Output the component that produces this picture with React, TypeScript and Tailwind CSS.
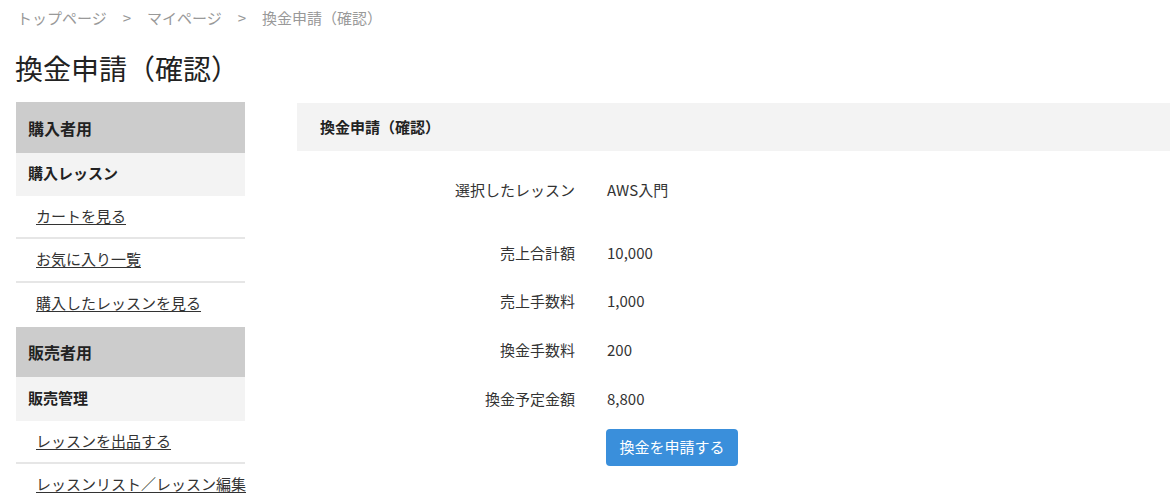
import React from "react";

const font = { fontFamily: '"Noto Sans CJK JP", "Noto Sans", sans-serif' };

type Row = { label: string; value: string; gap: string };

const rows: Row[] = [
  { label: "売上合計額", value: "10,000", gap: "h-[26px]" },
  { label: "売上手数料", value: "1,000", gap: "h-[27px]" },
  { label: "換金手数料", value: "200", gap: "h-[27px]" },
  { label: "換金予定金額", value: "8,800", gap: "" },
];

function SideHead({ children, h }: { children: React.ReactNode; h: string }) {
  return (
    <div className={"bg-[#cccccc] flex items-center pl-3 text-base font-bold text-[#222] " + h}>
      {children}
    </div>
  );
}

function SideSub({ children, h }: { children: React.ReactNode; h: string }) {
  return (
    <div className={"bg-[#f3f3f3] flex items-center pl-3 pb-[2px] text-[15px] font-bold text-[#222] " + h}>
      {children}
    </div>
  );
}

function SideLink({ children, h, last }: { children: React.ReactNode; h: string; last?: boolean }) {
  return (
    <div
      className={
        "flex items-center pl-5 text-[15px] text-[#333] whitespace-nowrap " +
        h +
        (last ? " pb-[4px]" : " pb-[1px] border-b-2 border-[#e6e6e6]")
      }
    >
      <a href="#" className="underline underline-offset-2">
        {children}
      </a>
    </div>
  );
}

export default function App() {
  return (
    <div className="bg-white w-[1171px] h-[497px] overflow-hidden text-[#333]" style={font}>
      <div className="pl-[17px] pt-[8px] leading-[20px] flex items-center gap-[16px] text-[15px] text-[#999]">
        <span>トップページ</span>
        <span>&gt;</span>
        <span>マイページ</span>
        <span>&gt;</span>
        <span>換金申請（確認）</span>
      </div>
      <h1 className="pl-[15px] mt-[24px] text-[28px] leading-[32px] text-[#222]">換金申請（確認）</h1>
      <div className="flex mt-[18px] pl-4 gap-[52px]">
        <div className="w-[229px] shrink-0">
          <SideHead h="h-[51px]">購入者用</SideHead>
          <SideSub h="h-[43px]">購入レッスン</SideSub>
          <SideLink h="h-[43px]">カートを見る</SideLink>
          <SideLink h="h-[44px]">お気に入り一覧</SideLink>
          <SideLink h="h-[44px]" last>
            購入したレッスンを見る
          </SideLink>
          <SideHead h="h-[50px]">販売者用</SideHead>
          <SideSub h="h-[44px]">販売管理</SideSub>
          <SideLink h="h-[43px]">レッスンを出品する</SideLink>
          <SideLink h="h-[44px]" last>
            レッスンリスト／レッスン編集
          </SideLink>
        </div>
        <div className="flex-1 mr-[1px]">
          <div className="bg-[#f3f3f3] h-[48px] mt-[1px] flex items-center pl-[23px] text-[15px] font-bold text-[#222]">
            換金申請（確認）
          </div>
          <div className="mt-[28px] grid grid-cols-[278px_1fr] gap-x-8 text-[15px] text-[#333]">
            <div className="text-right h-[22px] leading-[22px]">選択したレッスン</div>
            <div className="h-[22px] leading-[22px]">AWS入門</div>
            <div className="col-span-2 h-[41px]" />
            {rows.map((r) => (
              <React.Fragment key={r.label}>
                <div className="text-right h-[22px] leading-[22px]">{r.label}</div>
                <div className="h-[22px] leading-[22px]">{r.value}</div>
                {r.gap && <div className={"col-span-2 " + r.gap} />}
              </React.Fragment>
            ))}
            <div />
            <div className="mt-[19px]">
              <button className="bg-[#3a8fdb] text-white text-[15px] rounded-[4px] w-[132px] h-[37px] -ml-[1px]">
                換金を申請する
              </button>
            </div>
          </div>
        </div>
      </div>
    </div>
  );
}
